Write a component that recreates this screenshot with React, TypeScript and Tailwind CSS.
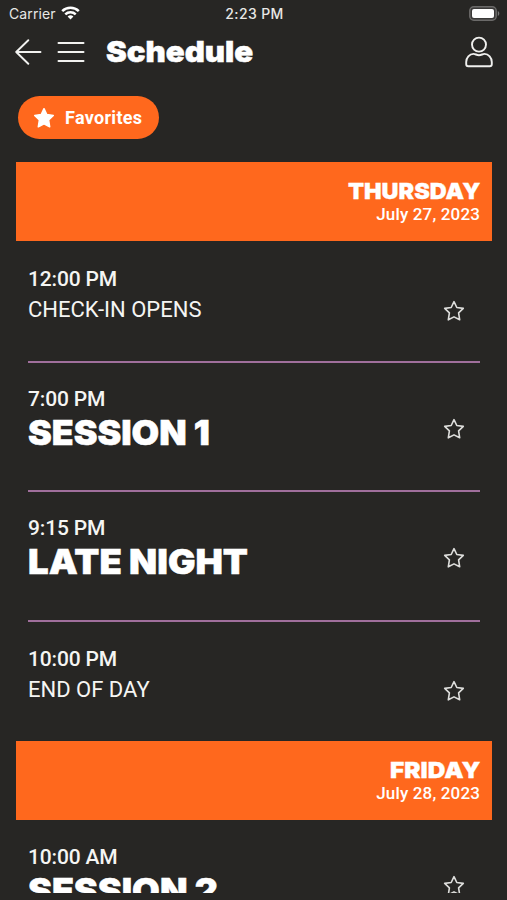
import { clsx } from 'clsx';

type Session = {
  time: string;
  title: string;
  featured?: boolean;
  rowClass: string;
  titleClass?: string;
  starClass: string;
};

type Day = { name: string; nameClass: string; date: string; sessions: Session[] };

const days: Day[] = [
  {
    name: 'THURSDAY',
    nameClass: 'scale-x-[1.065]',
    date: 'July 27, 2023',
    sessions: [
      { time: '12:00 PM', title: 'CHECK-IN OPENS', rowClass: 'h-[122px] pt-6 border-b-2', starClass: 'mt-[35px]' },
      { time: '7:00 PM', title: 'SESSION 1', featured: true, rowClass: 'h-[129px] pt-[22px] border-b-2', titleClass: 'scale-x-[1.05]', starClass: 'mt-[33px]' },
      { time: '9:15 PM', title: 'LATE NIGHT', featured: true, rowClass: 'h-[130px] pt-[22px] border-b-2', titleClass: 'scale-x-[1.075]', starClass: 'mt-[33px]' },
      { time: '10:00 PM', title: 'END OF DAY', rowClass: 'h-[119px] pt-[23px]', starClass: 'mt-[35px]' },
    ],
  },
  {
    name: 'FRIDAY',
    nameClass: 'scale-x-[1.11]',
    date: 'July 28, 2023',
    sessions: [
      { time: '10:00 AM', title: 'SESSION 2', featured: true, rowClass: 'h-[129px] pt-[23px]', titleClass: 'scale-x-[1.055]', starClass: 'mt-[32px]' },
    ],
  },
];

function StatusBar() {
  return (
    <div className="grid grid-cols-3 items-center h-7 pl-[9px] pr-[7px] font-['Inter'] text-[14px] text-[#e8e8e6]">
      <div className="flex items-center gap-[5px] pb-[2px]">
        <span className="tracking-[0.1px]">Carrier</span>
        <svg width="19" height="14" viewBox="0 0 19 14" fill="none" stroke="#fff" strokeWidth="2.5">
          <path d="M1.2 5.2a11.8 11.8 0 0 1 16.6 0" />
          <path d="M4.3 8.4a7.4 7.4 0 0 1 10.4 0" />
          <path d="M9.5 13.6 6.6 10.6a4.1 4.1 0 0 1 5.8 0z" fill="#fff" stroke="none" />
        </svg>
      </div>
      <span className="text-center font-medium tracking-[0.4px] pb-[2px]">2:23 PM</span>
      <svg className="justify-self-end mb-[2px]" width="31" height="15" viewBox="0 0 31 15">
        <rect x="0.8" y="0.8" width="26.4" height="13.4" rx="4" fill="#3a3938" stroke="#6b6a69" strokeWidth="1.5" />
        <rect x="3" y="3" width="22" height="9" rx="2" fill="#fff" />
        <path d="M28.8 5v5c2-.9 2-4.1 0-5z" fill="#777" />
      </svg>
    </div>
  );
}

function Header() {
  return (
    <header className="flex items-center h-12 pl-[15px] pr-[14px]">
      <svg width="27" height="26" viewBox="0 0 27 26" fill="none" stroke="#f2f2f0" strokeWidth="1.9" strokeLinecap="round" strokeLinejoin="round">
        <path d="M13.3 1.2 1.2 13l12.1 11.8M1.2 13h24.3" />
      </svg>
      <svg className="ml-[15px]" width="28" height="24" viewBox="0 0 28 24" stroke="#f2f2f0" strokeWidth="2" strokeLinecap="round">
        <path d="M1.5 3h25M1.5 12h25M1.5 21h25" />
      </svg>
      <h1 className="ml-[21px] font-['Inter'] font-black text-[29px] leading-[48px] text-white origin-left scale-x-[1.075] whitespace-nowrap [-webkit-text-stroke:0.5px_white]">
        Schedule
      </h1>
      <svg className="ml-auto" width="28" height="32" viewBox="0 0 28 32" fill="none" stroke="#f0f0ee" strokeWidth="1.9">
        <circle cx="14" cy="8.6" r="7" />
        <path d="M8.5 17.9C4.5 17.9 1.2 21.6 1.2 26v2.2c0 1.3.8 2.1 2.1 2.1h21.4c1.3 0 2.1-.8 2.1-2.1V26c0-4.400-3.300-8.100-7.300-8.100-2 0-3 1.300-5.500 1.300s-3.500-1.300-5.500-1.300z" />
      </svg>
    </header>
  );
}

function StarIcon({ filled, className }: { filled?: boolean; className?: string }) {
  return (
    <svg
      className={className}
      width="22"
      height="22"
      viewBox="0 0 22 22"
      fill={filled ? '#fff' : 'none'}
      stroke={filled ? '#fff' : '#dededc'}
      strokeWidth={filled ? 1.5 : 1.6}
      strokeLinejoin="round"
    >
      <path d="M11 1.700 13.800 7.500 20.300 8.400 15.600 12.900 16.700 19.800 11 16.900 5.300 19.800 6.400 12.900 1.700 8.400 8.200 7.500z" />
    </svg>
  );
}

function SessionRow({ time, title, featured, rowClass, titleClass, starClass }: Session) {
  return (
    <div className={clsx('flex justify-between mx-3 border-[#a06f9c]', rowClass)}>
      <div>
        <div className="text-[21px] leading-7 font-medium tracking-[-0.15px] whitespace-nowrap">{time}</div>
        <div
          className={clsx(
            'w-fit origin-left whitespace-nowrap',
            featured
              ? "font-['Inter'] font-black text-[34px] leading-10 text-white [-webkit-text-stroke:0.5px_white]"
              : 'text-[22px] leading-[34px]',
            titleClass,
          )}
        >
          {title}
        </div>
      </div>
      <StarIcon className={clsx('mr-[15px] shrink-0', starClass)} />
    </div>
  );
}

export default function App() {
  return (
    <main className="flex flex-col h-[900px] w-[507px] overflow-hidden bg-[#272624] font-['Roboto'] text-[#f5f5f3]">
      <StatusBar />
      <Header />
      <div className="h-[817px] overflow-hidden pl-4 pr-[15px]">
        <button className="mt-5 ml-[2px] flex items-center w-[141px] h-[43px] rounded-full bg-[#ff681d] pl-[15px] text-white">
          <StarIcon filled />
          <span className="ml-[10px] text-[18px] font-bold tracking-[0.3px]">Favorites</span>
        </button>
        <div className="mt-[23px]">
          {days.map((day) => (
            <section key={day.name}>
              <div className="flex flex-col items-end h-[79px] pt-[17px] pr-3 bg-[#ff681d] text-white">
                <h2 className={clsx("font-['Inter'] font-black text-[22px] leading-[25px] origin-right [-webkit-text-stroke:0.3px_white]", day.nameClass)}>
                  {day.name}
                </h2>
                <p className="text-[17px] leading-5 font-medium tracking-[0.15px]">{day.date}</p>
              </div>
              {day.sessions.map((s) => (
                <SessionRow key={s.time} {...s} />
              ))}
            </section>
          ))}
        </div>
      </div>
    </main>
  );
}
